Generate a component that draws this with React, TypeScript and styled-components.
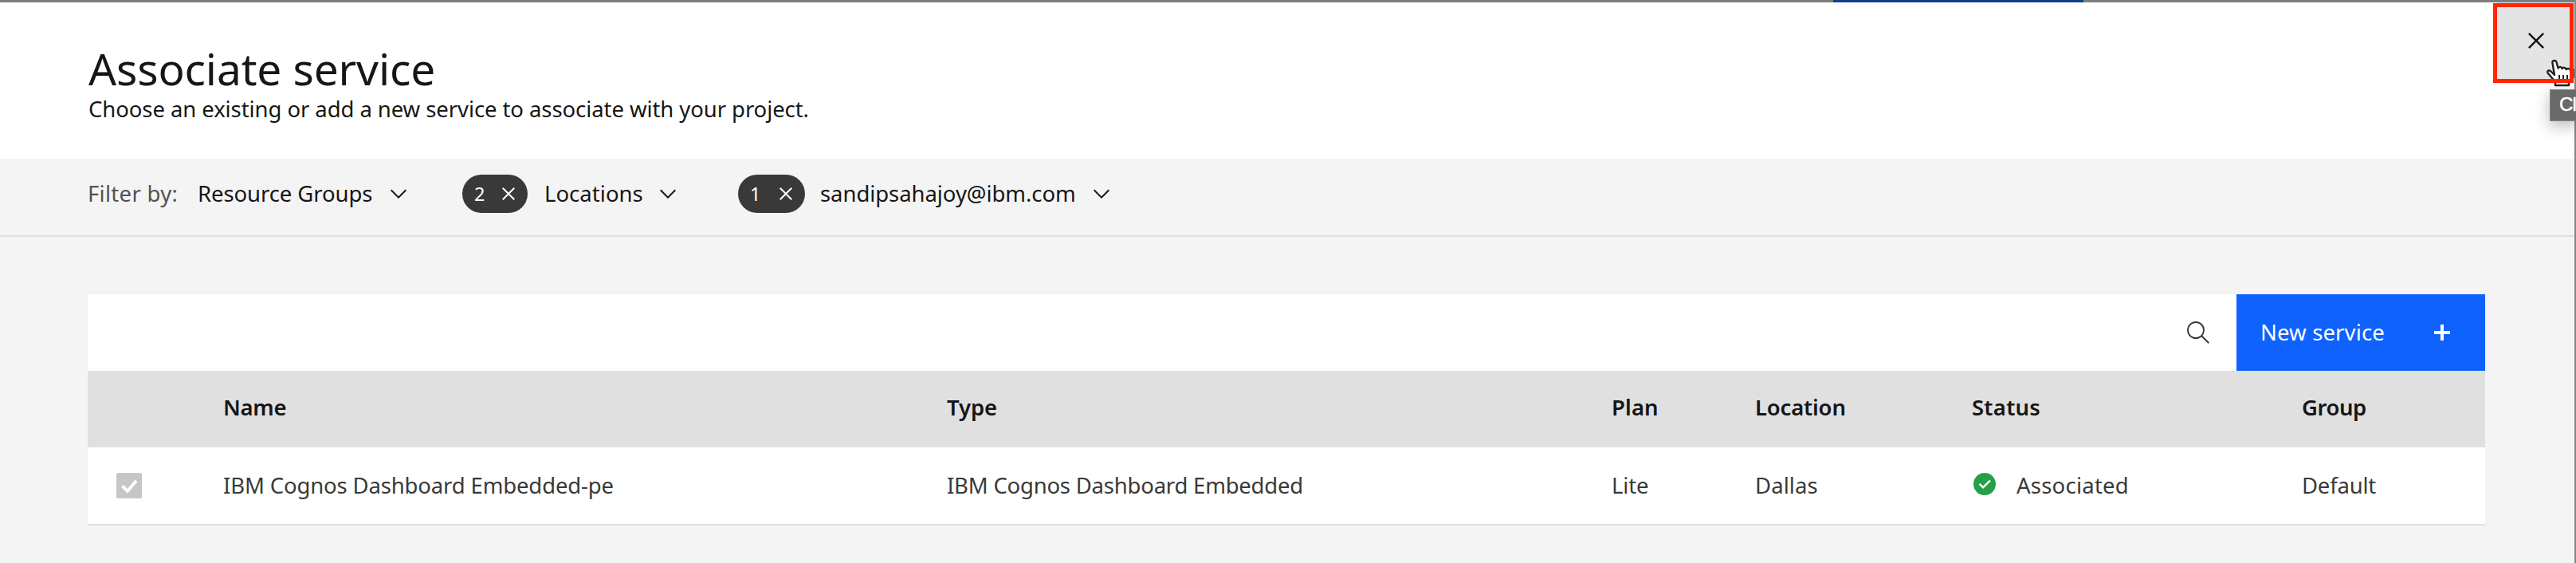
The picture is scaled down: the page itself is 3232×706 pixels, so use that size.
import React from "react";
import styled, { createGlobalStyle } from "styled-components";

const Global = createGlobalStyle`
  * { box-sizing: border-box; }
  body { margin: 0; background: #f4f4f4; overflow: hidden; }
`;

const Page = styled.div`
  position: relative;
  width: 3232px;
  height: 706px;
  overflow: hidden;
  background: #f4f4f4;
  color: #161616;
  font-family: "Noto Sans", "Open Sans", sans-serif;
  font-size: 27.5px;
  line-height: 36px;
  white-space: nowrap;
`;

const BackdropEdge = styled.div`
  display: flex;
  height: 3px;
  padding-left: 2300px;
  background: #7d7d7d;
`;

const BackdropAccent = styled.div`
  width: 314px;
  background: #123f8d;
`;

const BackdropSide = styled.div`
  position: absolute;
  top: 0;
  right: 0;
  width: 2px;
  height: 100%;
  background: #868686;
`;

const Header = styled.header`
  height: 196px;
  padding: 49px 0 0 111px;
  background: #fff;
`;

const Title = styled.h1`
  margin: 0;
  font-size: 55px;
  font-weight: 400;
  line-height: 68px;
  letter-spacing: -0.13px;
`;

const Subtitle = styled.p`
  margin: 0;
  line-height: 34px;
  letter-spacing: -0.08px;
`;

const FilterBar = styled.div`
  display: flex;
  align-items: center;
  height: 98px;
  padding: 0 0 8px 110px;
  border-bottom: 2px solid #e0e0e0;
`;

const FilterLabel = styled.span`
  width: 138px;
  color: #525252;
  letter-spacing: 0.3px;
`;

const Filter = styled.div<{ $width: number }>`
  display: flex;
  align-items: center;
  width: ${(p) => p.$width}px;
`;

const FilterText = styled.span<{ $width: number; $spacing?: number }>`
  width: ${(p) => p.$width}px;
  letter-spacing: ${(p) => p.$spacing ?? 0}px;
`;

const Tag = styled.span<{ $width: number }>`
  display: flex;
  align-items: center;
  justify-content: space-between;
  width: ${(p) => p.$width}px;
  height: 48px;
  margin-right: ${(p) => 103 - p.$width}px;
  padding: 0 8px 0 15px;
  border-radius: 24px;
  background: #393939;
  color: #fff;
  font-size: 23.5px;
`;

const Icon = styled.svg`
  display: block;
  flex: none;
  width: 32px;
  height: 32px;
  fill: currentColor;
`;

const TableCard = styled.section`
  width: 3008px;
  margin: 72px 0 0 110px;
  border-bottom: 2px solid #e0e0e0;
  background: #fff;
`;

const Toolbar = styled.div`
  display: flex;
  align-items: center;
  justify-content: flex-end;
  gap: 32px;
  height: 96px;
  color: #393939;
`;

const NewService = styled.button`
  display: flex;
  align-items: center;
  justify-content: space-between;
  width: 312px;
  height: 96px;
  padding: 0 38px 0 30px;
  border: 0;
  background: #0f62fe;
  color: #fff;
  font: inherit;
  letter-spacing: 0.13px;
`;

const Row = styled.div<{ $head?: boolean }>`
  display: grid;
  grid-template-columns: 134px 908px 834px 180px 272px 414px 1fr;
  align-items: center;
  height: 96px;
  padding: 0 0 ${(p) => (p.$head ? 5 : 0)}px 36px;
  background: ${(p) => (p.$head ? "#e0e0e0" : "#fff")};
  color: ${(p) => (p.$head ? "#161616" : "#393939")};
  font-weight: ${(p) => (p.$head ? 600 : 400)};
`;

const Cell = styled.span<{ $spacing: number }>`
  display: flex;
  align-items: center;
  letter-spacing: ${(p) => p.$spacing}px;
`;

const CheckBox = styled.span`
  width: 32px;
  height: 32px;
  border-radius: 2px;
  background: #c6c6c6;
`;

const StatusIcon = styled(Icon)`
  margin: 0 24px 4px 0;
  color: #24a148;
`;

const CloseButton = styled.button`
  position: absolute;
  top: 3px;
  left: 3133px;
  display: flex;
  align-items: center;
  justify-content: center;
  width: 97px;
  height: 96px;
  padding: 0 0 0 1px;
  border: 0;
  background: #e4e4e4;
  color: #161616;
`;

const CloseIcon = styled(Icon)`
  width: 40px;
  height: 40px;
`;

const Highlight = styled.div`
  position: absolute;
  top: 4px;
  left: 3128px;
  width: 101px;
  height: 100px;
  border: 5px solid #ff2600;
`;

const Pointer = styled.svg`
  position: absolute;
  top: 74px;
  left: 3194px;
  width: 36px;
  height: 36px;
`;

const Tooltip = styled.div`
  position: absolute;
  top: 112px;
  left: 3199px;
  width: 34px;
  height: 40px;
  padding-left: 11px;
  border: 1px solid #858585;
  background: #696969;
  box-shadow: 0 6px 20px rgba(0, 0, 0, 0.28);
  color: #fff;
  font: 500 24px/36px "Liberation Sans", Arial, sans-serif;
  letter-spacing: -0.8px;
  -webkit-text-stroke: 0.5px #fff;
`;

const Chevron = () => (
  <Icon viewBox="0 0 16 16">
    <path d="M8 11L3 6l.7-.7L8 9.6l4.3-4.3.7.7z" />
  </Icon>
);

const CLOSE_PATH =
  "M12 4.7L11.3 4 8 7.3 4.7 4 4 4.7 7.3 8 4 11.3l.7.7L8 8.7l3.3 3.3.7-.7L8.7 8z";

const Close = () => (
  <Icon viewBox="0 0 16 16">
    <path d={CLOSE_PATH} />
  </Icon>
);

const columns: [string, number][] = [
  ["Name", -0.3],
  ["Type", -0.1],
  ["Plan", 0.1],
  ["Location", -0.2],
  ["Status", 0.25],
  ["Group", -0.45],
];

export default function App() {
  return (
    <Page>
      <Global />
      <BackdropEdge>
        <BackdropAccent />
      </BackdropEdge>
      <Header>
        <Title>Associate service</Title>
        <Subtitle>Choose an existing or add a new service to associate with your project.</Subtitle>
      </Header>
      <FilterBar>
        <FilterLabel>Filter by:</FilterLabel>
        <Filter $width={332}>
          <FilterText $width={236} $spacing={-0.08}>Resource Groups</FilterText>
          <Chevron />
        </Filter>
        <Filter $width={346}>
          <Tag $width={82}>
            2<Close />
          </Tag>
          <FilterText $width={139} $spacing={0.03}>Locations</FilterText>
          <Chevron />
        </Filter>
        <Filter $width={474}>
          <Tag $width={84}>
            1<Close />
          </Tag>
          <FilterText $width={337} $spacing={-0.07}>sandipsahajoy@ibm.com</FilterText>
          <Chevron />
        </Filter>
      </FilterBar>
      <TableCard>
        <Toolbar>
          <Icon viewBox="0 0 16 16">
            <path d="M15 14.3L10.7 10c1.9-2.3 1.6-5.8-.7-7.7S4.2.7 2.3 3 .7 8.8 3 10.7c2 1.7 5 1.7 7 0l4.3 4.3.7-.7zM2 6.5C2 4 4 2 6.5 2S11 4 11 6.5 9 11 6.5 11 2 9 2 6.5z" />
          </Icon>
          <NewService>
            New service
            <Icon viewBox="0 0 16 16">
              <path d="M9 7V3H7v4H3v2h4v4h2V9h4V7z" />
            </Icon>
          </NewService>
        </Toolbar>
        <Row $head>
          <span />
          {columns.map(([name, spacing]) => (
            <Cell key={name} $spacing={spacing}>{name}</Cell>
          ))}
        </Row>
        <Row>
          <CheckBox>
            <Icon viewBox="0 0 32 32">
              <path d="M7.400 16.300l6.600 6.500 11-13" fill="none" stroke="#fff" strokeWidth="4" />
            </Icon>
          </CheckBox>
          <Cell $spacing={-0.15}>IBM Cognos Dashboard Embedded-pe</Cell>
          <Cell $spacing={-0.22}>IBM Cognos Dashboard Embedded</Cell>
          <Cell $spacing={-0.14}>Lite</Cell>
          <Cell $spacing={0.08}>Dallas</Cell>
          <Cell $spacing={0.23}>
            <StatusIcon viewBox="0 0 16 16">
              <path d="M8 1C4.1 1 1 4.1 1 8s3.1 7 7 7 7-3.1 7-7-3.1-7-7-7zM7 11L4.3 8.3l.9-.8L7 9.3l4-3.9.9.8L7 11z" />
            </StatusIcon>
            Associated
          </Cell>
          <Cell $spacing={-0.2}>Default</Cell>
        </Row>
      </TableCard>
      <BackdropSide />
      <CloseButton aria-label="Close">
        <CloseIcon viewBox="0 0 16 16">
          <path d={CLOSE_PATH} />
        </CloseIcon>
      </CloseButton>
      <Tooltip>Cl</Tooltip>
      <Pointer viewBox="0 0 36 36">
        <path
          d="M11 20L8.500 5C8 1.500 12.500 .800 13.500 4L15.500 11.500C17 9 20 9.500 20.500 12C22.500 10 25 10.500 25.500 13C28 11 30.500 12 31 14.500L34.500 13V23L29 28V33H12V29L9 25L3 18C1 15 4 13 6.500 15.500L10 19Z"
          fill="#fff"
          stroke="#222"
          strokeWidth="2.400"
          strokeLinejoin="round"
        />
        <path d="M17 20v9M22 20v9M27 20v9" stroke="#222" strokeWidth="2" />
      </Pointer>
      <Highlight />
    </Page>
  );
}
